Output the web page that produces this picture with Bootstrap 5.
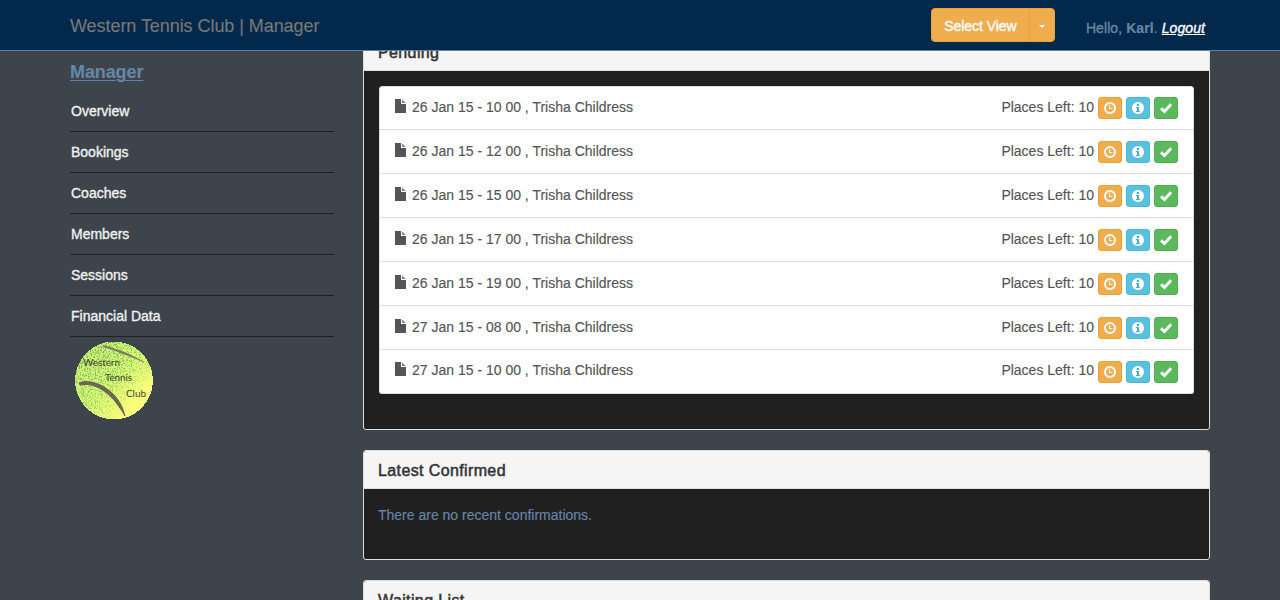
<!DOCTYPE html>
<html lang="en">
<head>
<meta charset="utf-8">
<meta name="viewport" content="width=device-width, initial-scale=1">
<title>Western Tennis Club | Manager</title>
<link href="https://cdn.jsdelivr.net/npm/bootstrap@5.3.0/dist/css/bootstrap.min.css" rel="stylesheet">
<style>
html,body{height:600px;overflow:hidden}
body{background:#3d444b;color:#6686a6;font:14px/20px "Liberation Sans",Arial,sans-serif;-webkit-text-stroke:.15px currentColor}
.wide{width:1170px;max-width:1170px;padding:0 15px}
.topbar{height:51px;background:#02284b;border-bottom:1px solid #5f82a5;z-index:10}
.brand-name{font-size:18px;color:#777;letter-spacing:-.06px;line-height:20px;padding-top:1px}
.med{-webkit-text-stroke:.35px currentColor}
.view-btn{--bs-btn-color:#fff;--bs-btn-bg:#f0ad4e;--bs-btn-border-color:#eea236;--bs-btn-hover-bg:#ec971f;--bs-btn-hover-color:#fff;--bs-btn-border-radius:4px;height:34px;font-size:14px;line-height:20px;padding:7px 12px 5px;letter-spacing:-.05px}
.view-main{width:99px}
.view-caret{width:26px;padding:6px 8px;display:flex;align-items:center;justify-content:center}
.view-caret svg{margin-top:2px}
.hello{margin-left:31px;margin-right:5px;padding-top:6px;white-space:nowrap;letter-spacing:.08px}
.page{margin-top:32px}
.side{width:264px;margin-top:30px}
.side h4{font-size:18px;line-height:20px;margin:0 0 9px;font-weight:bold;text-decoration:underline;text-underline-offset:2px;text-decoration-thickness:1px;letter-spacing:-.1px}
.side a{display:block;color:#f0f0f0;text-decoration:none;height:41px;padding:10px 0 0 1px;border-bottom:1px solid #202122}
.side svg{display:block;margin:4px 0 0 5px}
.content-col{width:847px}
.panel{border:1px solid #ddd;border-radius:3px;background:#202020;margin-bottom:20px}
.panel-head{height:38px;background:#f5f5f5;color:#333;border-bottom:1px solid #ddd;border-radius:2px 2px 0 0;font-size:16px;line-height:18px;padding:11px 15px 0 14px;letter-spacing:.38px;-webkit-text-stroke:.5px currentColor}
.sessions{--bs-list-group-border-color:#ddd;--bs-list-group-border-radius:3px;margin:15px 15px 35px}
.sessions .list-group-item{height:44px;padding:11px 15px 0 14px;color:#555}
.sessions .list-group-item:first-child{padding-top:10px}
.sessions .list-group-item:last-child>span{margin-top:-1px}
.doc{width:11px;height:14px;display:block;margin:2px 6px 0 1px}
.icon-btn{--bs-btn-padding-x:0;--bs-btn-padding-y:0;--bs-btn-border-radius:3px;width:24px;height:22px;display:flex;align-items:center;justify-content:center;margin-left:4px}
.icon-btn svg{display:block}
.amber{--bs-btn-bg:#f0ad4e;--bs-btn-border-color:#eea236}
.sky{--bs-btn-bg:#5bc0de;--bs-btn-border-color:#46b8da}
.leaf{--bs-btn-bg:#5cb85c;--bs-btn-border-color:#4cae4c}
.notice{height:70px;padding:16px 14px}
</style>
</head>
<body>
<svg width="0" height="0" class="position-absolute">
  <symbol id="file" viewBox="0 0 11 14"><path fill="#555" d="M0 0h6v5h5v9H0z"/><path fill="#555" d="M7 0.3 10.7 4H7z" opacity=".75"/></symbol>
  <symbol id="clock" viewBox="0 0 12 12"><circle cx="6" cy="6" r="5" fill="none" stroke="#fff" stroke-width="2"/><path d="M5.500 3v3.500h3" fill="none" stroke="#fff" stroke-width="1"/></symbol>
  <symbol id="info" viewBox="0 0 12 12"><circle cx="6" cy="6" r="6" fill="#fff"/><path fill="#46acd0" d="M5 2h2v2H5zM4 5h3v4h1v1H4V9h1V6H4z"/></symbol>
  <symbol id="tick" viewBox="0 0 12 12"><path d="M1 6.300 4.500 9.500 11.200 2.200" fill="none" stroke="#fff" stroke-width="3"/></symbol>
</svg>

<nav class="topbar fixed-top">
  <div class="container wide d-flex align-items-center h-100">
    <div class="brand-name me-auto"><span>Western Tennis Club | Manager</span></div>
    <div class="btn-group">
      <button class="btn view-btn view-main med">Select View</button>
      <button class="btn view-btn view-caret" aria-label="Choose view"><svg width="6" height="3"><path fill="#fff" d="M0 0h6L3 3z"/></svg></button>
    </div>
    <div class="hello"><span class="med">Hello, </span><b>Karl</b>. <i class="text-white text-decoration-underline med">Logout</i></div>
  </div>
</nav>

<main class="container wide page d-flex justify-content-between">
  <aside class="side">
    <h4><span>Manager</span></h4>
    <nav class="med">
      <a href="#">Overview</a><a href="#">Bookings</a><a href="#">Coaches</a><a href="#">Members</a><a href="#">Sessions</a><a href="#">Financial Data</a>
    </nav>
    <svg width="80" height="80" viewBox="0 0 80 80">
      <defs>
        <linearGradient id="felt" x1="0" y1="0" x2="1" y2="1"><stop offset="0" stop-color="#b8ec70"/><stop offset=".5" stop-color="#d2fa74"/><stop offset=".8" stop-color="#ffff7e"/></linearGradient>
        <linearGradient id="fade" x1="0" y1="0" x2="1" y2="1"><stop offset=".2" stop-color="#fff"/><stop offset=".5" stop-color="#aaa"/><stop offset=".78" stop-color="#000"/></linearGradient>
        <mask id="shade"><circle cx="39" cy="39.500" r="39" fill="url(#fade)"/></mask>
        <filter id="speckle" x="0" y="0" width="1" height="1" color-interpolation-filters="sRGB"><feTurbulence type="fractalNoise" baseFrequency=".73" numOctaves="3" seed="4"/><feColorMatrix values="0 0 0 0 .42  0 0 0 0 .48  0 0 0 0 .3  10 0 0 0 -5.3"/></filter>
      </defs>
      <circle cx="39" cy="39.500" r="39" fill="url(#felt)" shape-rendering="crispEdges"/>
      <g mask="url(#shade)"><rect width="80" height="80" filter="url(#speckle)" opacity=".62"/></g>
      <path d="M4 42C14 38 28 43 38 53 46 61 48 68 50 75 46 68 40 59 33 53 23 45 14 42 5 44z" fill="#6c6750" stroke="#6c6750" stroke-width="1"/>
      <path d="M28 4.500C42 8 55 13 69 21 56 16 42 10 28 5.500z" fill="#77725b" stroke="#77725b" stroke-width=".5"/>
      <g font-family="Lato,sans-serif" font-size="10" fill="#3a4236"><text x="8" y="25" textLength="37">Western</text><text x="30" y="40" textLength="27">Tennis</text><text x="51" y="56" textLength="20">Club</text></g>
    </svg>
  </aside>

  <section class="content-col">
    <div class="panel">
      <div class="panel-head">Pending</div>
      <ul class="list-group sessions" id="sessions"></ul>
    </div>
    <div class="panel">
      <div class="panel-head"><span>Latest Confirmed</span></div>
      <div class="notice"><span>There are no recent confirmations.</span></div>
    </div>
    <div class="panel">
      <div class="panel-head">Waiting List</div>
    </div>
  </section>
</main>
<script src="https://cdn.jsdelivr.net/npm/bootstrap@5.3.0/dist/js/bootstrap.bundle.min.js"></script>
<script>
const icon = (id, tone) => `<button class="btn icon-btn ${tone}"><svg width="12" height="12"><use href="#${id}"/></svg></button>`;
document.getElementById('sessions').innerHTML =
  ['26 Jan 15 - 10 00','26 Jan 15 - 12 00','26 Jan 15 - 15 00','26 Jan 15 - 17 00','26 Jan 15 - 19 00','27 Jan 15 - 08 00','27 Jan 15 - 10 00']
  .map(t => `<li class="list-group-item d-flex align-items-start"><span class="me-auto d-flex"><svg class="doc"><use href="#file"/></svg><span>${t} , Trisha Childress</span></span><span>Places Left: 10</span>${icon('clock','amber')}${icon('info','sky')}${icon('tick','leaf')}</li>`).join('');
</script>
</body>
</html>
